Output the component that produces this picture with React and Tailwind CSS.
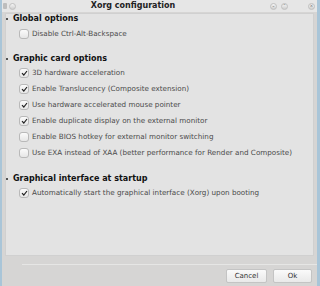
import React from "react";

function Check({ checked }) {
  return (
    <span className="w-[10px] h-[10px] rounded-[3px] border border-[#b9b9b9] bg-gradient-to-b from-[#fbfbfb] to-[#e6e6e6] flex items-center justify-center shrink-0">
      {checked && (
        <svg width="7" height="6" viewBox="0 0 7 6">
          <path d="M1 3.2 L2.8 5 L6 1" stroke="#222" strokeWidth="1.2" fill="none" />
        </svg>
      )}
    </span>
  );
}

function Item({ checked, label }) {
  return (
    <div className="flex items-center h-[10px] gap-[3px] pl-[13px]">
      <Check checked={checked} />
      <span className="text-[7.2px] leading-none text-[#4a4a4a] whitespace-nowrap">{label}</span>
    </div>
  );
}

function Heading({ children }) {
  return (
    <div className="flex items-center h-[10px] gap-[5px]">
      <span className="w-[2px] h-[2px] rounded-full bg-[#222]" />
      <span className="text-[8px] leading-none font-bold text-[#111] whitespace-nowrap">{children}</span>
    </div>
  );
}

function Circle({ children }) {
  return (
    <span className="w-[7px] h-[7px] rounded-full bg-gradient-to-b from-[#f4f4f4] to-[#cfcfcf] border border-[#c0c0c0] flex items-center justify-center text-[4px] leading-none text-[#666]">
      {children}
    </span>
  );
}

export default function App() {
  return (
    <div className="w-[320px] h-[286px] flex flex-col bg-[#d6d5d4] border-l-2 border-r-[3px] border-[#a9c5d8] font-['DejaVu_Sans',sans-serif] overflow-hidden">
      <div className="h-[12px] flex items-center relative bg-[#e6e6e6] shrink-0">
        <div className="flex items-center gap-[2px] pl-[1px]">
          <span className="w-[4px] h-[6px] bg-[#bdbdbd] rounded-[1px]" />
          <Circle />
        </div>
        <div className="flex-1 text-center text-[8px] font-bold text-[#222] leading-none pr-[20px]">Xorg configuration</div>
        <div className="flex items-center gap-[4px] pr-[2px]">
          <Circle>⌄</Circle>
          <Circle>⌃</Circle>
          <span className="w-[12px]" />
          <Circle>×</Circle>
        </div>
      </div>
      <div className="mx-[3px] mt-[1px] h-[243px] bg-[#e3e3e3] border border-[#d0d0d0] flex flex-col">
        <Heading>Global options</Heading>
        <div className="mt-[4.5px]">
          <Item checked={false} label="Disable Ctrl-Alt-Backspace" />
        </div>
        <div className="mt-[15.5px]"><Heading>Graphic card options</Heading></div>
        <div className="flex flex-col gap-[6px] mt-[4px]">
          <Item checked label="3D hardware acceleration" />
          <Item checked label="Enable Translucency (Composite extension)" />
          <Item checked label="Use hardware accelerated mouse pointer" />
          <Item checked label="Enable duplicate display on the external monitor" />
          <Item checked={false} label="Enable BIOS hotkey for external monitor switching" />
          <Item checked={false} label="Use EXA instead of XAA (better performance for Render and Composite)" />
        </div>
        <div className="mt-[16px]"><Heading>Graphical interface at startup</Heading></div>
        <div className="mt-[4px]">
          <Item checked label="Automatically start the graphical interface (Xorg) upon booting" />
        </div>
      </div>
      <div className="mt-[8px] ml-[20px] h-px bg-[#e6e6e5]" />
      <div className="flex justify-end gap-[6px] pr-[5px] mt-[4px]">
        <button className="w-[41px] h-[14px] rounded-[2px] border border-[#c4c4c4] bg-gradient-to-b from-[#fafafa] to-[#e9e9e9] text-[7px] text-[#333] leading-none">Cancel</button>
        <button className="w-[39px] h-[14px] rounded-[2px] border border-[#c4c4c4] bg-gradient-to-b from-[#fafafa] to-[#e9e9e9] text-[7px] text-[#333] leading-none">Ok</button>
      </div>
    </div>
  );
}
